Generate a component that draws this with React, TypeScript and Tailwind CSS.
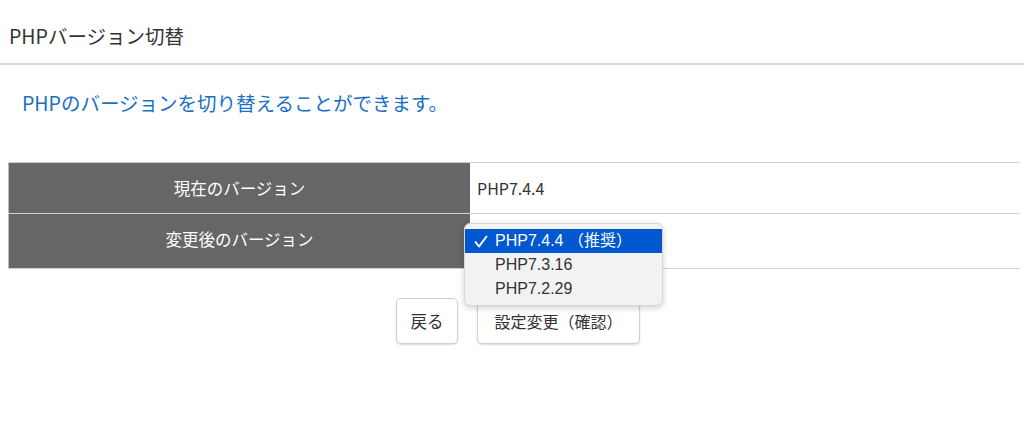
import React from "react";

const font = { fontFamily: '"Noto Sans CJK JP", "Noto Sans", sans-serif' };

export default function App() {
  return (
    <div className="relative w-[1024px] h-[444px] bg-white text-[#333]" style={font}>
      <div className="h-[65px] border-b-2 border-[#d9d9d9] flex items-center pl-[9px]">
        <h1 className="text-[19.5px] leading-none text-[#333] mt-[8px]">PHPバージョン切替</h1>
      </div>
      <p className="pl-[22px] pt-[25px] text-[19.5px] leading-[26px] text-[#1a6fc6]">
        PHPのバージョンを切り替えることができます。
      </p>
      <div className="ml-[8px] mr-[4px] mt-[46px] border-t border-[#cfcfcf]">
        <div className="flex h-[51px] border-b border-[#cfcfcf]">
          <div className="w-[462px] bg-[#666] text-white flex items-center justify-center text-[16.5px] border-l border-[#bbb]">
            現在のバージョン
          </div>
          <div className="flex-1 flex items-center pl-[7px] text-[16px] text-[#333]">PHP7.4.4</div>
        </div>
        <div className="flex h-[55px] border-b border-[#cfcfcf]">
          <div className="w-[462px] bg-[#666] text-white flex items-center justify-center text-[16.5px] border-l border-[#bbb] pb-[4px]">
            変更後のバージョン
          </div>
          <div className="flex-1"></div>
        </div>
      </div>
      <div className="flex pl-[396px] gap-[19px] mt-[29px]">
        <button className="w-[62px] h-[46px] bg-white border border-[#d0d0d0] rounded-[5px] shadow-[0_1px_2px_rgba(0,0,0,0.15)] text-[16.5px] text-[#333]">
          戻る
        </button>
        <button className="w-[163px] h-[46px] bg-white border border-[#d0d0d0] rounded-[5px] shadow-[0_1px_2px_rgba(0,0,0,0.15)] text-[16px] text-[#333]">
          設定変更（確認）
        </button>
      </div>
      <div
        className="absolute left-[464px] top-[223px] w-[199px] h-[83px] bg-[#f2f2f2] border border-[#d6d6d6] rounded-[6px] shadow-[0_2px_6px_rgba(0,0,0,0.18)] pt-[5px]"
        style={{ fontFamily: '"Liberation Sans", "Noto Sans CJK JP", sans-serif' }}
      >
        <div className="h-[24px] bg-[#0058d0] text-white flex items-center text-[16px]">
          <span className="w-[30px] pl-[9px] flex items-center">
            <svg width="14" height="13" viewBox="0 0 14 13" fill="none">
              <path d="M1.5 7 L5 11.5 L12.5 1.5" stroke="white" strokeWidth="2" strokeLinecap="round" strokeLinejoin="round" />
            </svg>
          </span>
          <span>PHP7.4.4 （推奨）</span>
        </div>
        <div className="h-[24px] flex items-center pl-[30px] text-[16px] text-[#333]">PHP7.3.16</div>
        <div className="h-[23px] flex items-center pl-[30px] text-[16px] text-[#333]">PHP7.2.29</div>
      </div>
    </div>
  );
}
